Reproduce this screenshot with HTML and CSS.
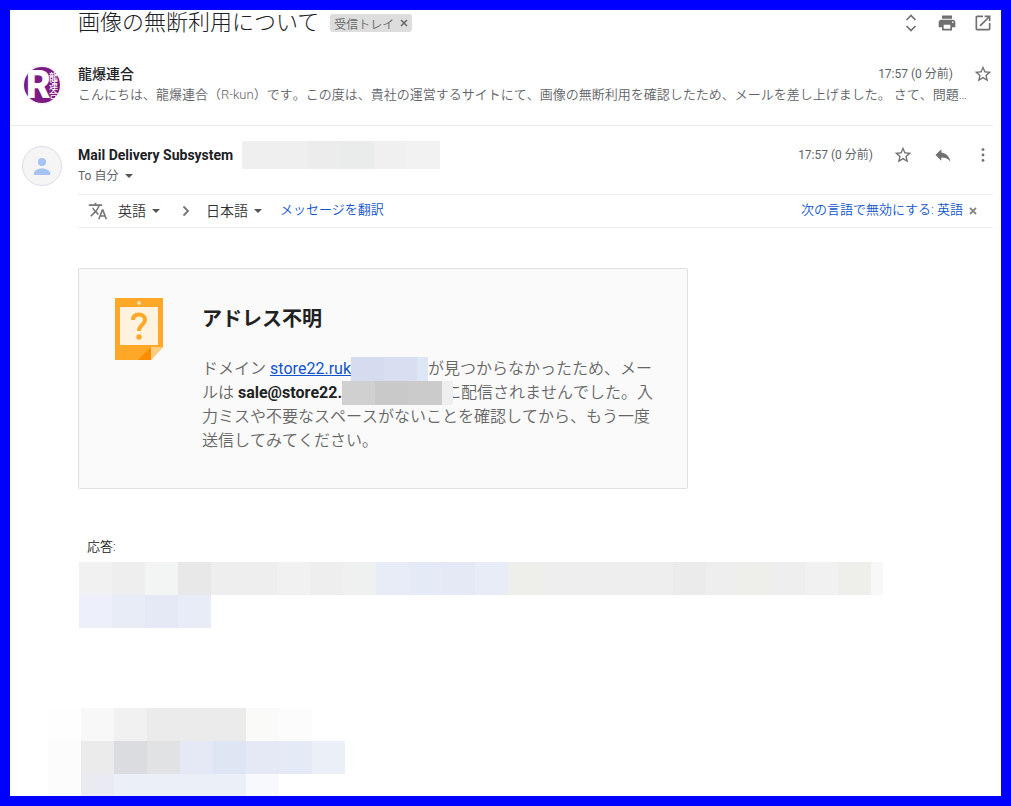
FILE: index.html
```html
<!DOCTYPE html>
<html lang="ja">
<head>
<meta charset="utf-8">
<title>画像の無断利用について</title>
<link rel="stylesheet" href="styles.css">
</head>
<body>
<main class="frame">
  <header class="subject">
    <h1 class="subject-title">画像の無断利用について</h1>
    <span class="chip">受信トレイ<button class="chip-close" aria-label="ラベルを削除"><svg width="8" height="8" viewBox="0 0 8 8"><path d="M1 1l6 6M7 1L1 7" stroke="#666" stroke-width="1.5"/></svg></button></span>
    <div class="tools">
      <button class="icon" aria-label="すべて展開"><svg viewBox="0 0 20 20"><path d="M5.500 7L10 2.500 14.500 7M5.500 13l4.500 4.500 4.500-4.500" fill="none" stroke="#707070" stroke-width="1.700"/></svg></button>
      <button class="icon" aria-label="印刷"><svg viewBox="0 0 24 24"><path d="M19 8H5c-1.66 0-3 1.34-3 3v6h4v4h12v-4h4v-6c0-1.66-1.34-3-3-3zm-3 11H8v-5h8v5zm3-7c-.55 0-1-.45-1-1s.45-1 1-1 1 .45 1 1-.45 1-1 1zm-1-9H6v4h12V3z"/></svg></button>
      <button class="icon" aria-label="新しいウィンドウで開く"><svg viewBox="0 0 24 24"><path d="M19 19H5V5h7V3H5c-1.11 0-2 .9-2 2v14c0 1.1.89 2 2 2h14c1.1 0 2-.9 2-2v-7h-2v7zM14 3v2h3.59l-9.83 9.83 1.41 1.41L19 6.41V10h2V3h-7z"/></svg></button>
    </div>
  </header>

  <article class="mail mail-closed">
    <svg class="avatar" viewBox="0 0 40 40" aria-hidden="true">
      <circle cx="20" cy="20" r="19" fill="#fff" stroke="#eee"/>
      <circle cx="20" cy="20" r="18" fill="#7b1b85"/>
      <text class="logo-r" x="4" y="33">R</text>
      <text class="logo-kanji" x="27" y="15">龍</text>
      <text class="logo-kanji" x="27" y="24">連</text>
      <text class="logo-kanji" x="27" y="33">合</text>
    </svg>
    <div class="mail-body">
      <div class="mail-line">
        <h2 class="sender">龍爆連合</h2>
        <span class="time">17:57 (0 分前)</span>
        <button class="icon" aria-label="スターを付ける"><svg viewBox="0 0 24 24"><path d="M22 9.24l-7.19-.62L12 2 9.19 8.63 2 9.24l5.46 4.73L5.82 21 12 17.27 18.18 21l-1.63-7.03L22 9.24zM12 15.4l-3.76 2.27 1-4.28-3.32-2.88 4.38-.38L12 6.1l1.71 4.04 4.38.38-3.32 2.88 1 4.28L12 15.4z"/></svg></button>
      </div>
      <p class="snippet">こんにちは、龍爆連合（R-kun）です。この度は、貴社の運営するサイトにて、画像の無断利用を確認したため、メールを差し上げました。 さて、問題…</p>
    </div>
  </article>

  <article class="mail">
    <svg class="avatar" viewBox="0 0 40 40" aria-hidden="true">
      <circle cx="20" cy="20" r="19.5" fill="#f5f5f5" stroke="#dadce8"/>
      <circle cx="20" cy="16" r="4" fill="#a5c3f5"/>
      <path d="M12 29v-2c0-3 5-4.500 8-4.500s8 1.500 8 4.500v2z" fill="#a5c3f5"/>
    </svg>
    <div class="mail-body">
      <div class="mail-line">
        <h2 class="sender sender-open">Mail Delivery Subsystem</h2>
        <span class="mask mask-address"></span>
        <span class="time">17:57 (0 分前)</span>
        <button class="icon" aria-label="スターを付ける"><svg viewBox="0 0 24 24"><path d="M22 9.24l-7.19-.62L12 2 9.19 8.63 2 9.24l5.46 4.73L5.82 21 12 17.27 18.18 21l-1.63-7.03L22 9.24zM12 15.4l-3.76 2.27 1-4.28-3.32-2.88 4.38-.38L12 6.1l1.71 4.04 4.38.38-3.32 2.88 1 4.28L12 15.4z"/></svg></button>
        <button class="icon" aria-label="返信"><svg viewBox="0 0 24 24"><path d="M10 9V5l-7 7 7 7v-4.100c5 0 8.500 1.600 11 5.100-1-5-4-10-11-11z"/></svg></button>
        <button class="icon" aria-label="その他"><svg viewBox="0 0 24 24"><circle cx="12" cy="5.500" r="1.700"/><circle cx="12" cy="12" r="1.700"/><circle cx="12" cy="18.500" r="1.700"/></svg></button>
      </div>
      <button class="recipient">To 自分<svg class="caret" viewBox="0 0 8 4"><path d="M0 0h8L4 4z"/></svg></button>

      <div class="translate">
        <svg class="translate-icon" viewBox="0 0 24 24"><path d="M12.870 15.070l-2.540-2.510.03-.03c1.740-1.940 2.980-4.170 3.710-6.530H17V4h-7V2H8v2H1v1.990h11.170C11.500 7.920 10.440 9.750 9 11.350 8.070 10.320 7.300 9.190 6.690 8h-2c.73 1.630 1.730 3.170 2.980 4.560l-5.090 5.020L4 19l5-5 3.110 3.110.76-2.040zM18.500 10h-2L12 22h2l1.120-3h4.750L21 22h2l-4.500-12zm-2.620 7l1.620-4.330L19.120 17h-3.240z"/></svg>
        <label class="language"><select aria-label="元の言語"><option>英語</option></select><svg class="caret" viewBox="0 0 8 4"><path d="M0 0h8L4 4z"/></svg></label>
        <svg class="chevron" viewBox="0 0 8 12"><path d="M1.500 1.500L6 6l-4.500 4.500" fill="none" stroke="#757575" stroke-width="1.800"/></svg>
        <label class="language"><select aria-label="翻訳先の言語"><option>日本語</option></select><svg class="caret" viewBox="0 0 8 4"><path d="M0 0h8L4 4z"/></svg></label>
        <a class="link" href="#">メッセージを翻訳</a>
        <a class="link link-off" href="#">次の言語で無効にする: 英語</a>
        <button class="bar-close" aria-label="閉じる"><svg width="8" height="8" viewBox="0 0 8 8"><path d="M1 1l6 6M7 1L1 7" stroke="#888" stroke-width="1.800"/></svg></button>
      </div>

      <section class="notice">
        <svg class="notice-icon" viewBox="0 0 48 62" aria-hidden="true">
          <path d="M0 0h48v49L36 62H0z" fill="#ffa726"/>
          <circle cx="24" cy="5" r="2" fill="#ffe0b2"/>
          <path d="M5 9h38v38H5z" fill="#fff3e0"/>
          <path d="M23 62l13-13v13z" fill="#fb8c00"/>
          <path d="M36 49h12L36 62z" fill="#ffcc80"/>
          <path d="M18 22c0-4 2.500-5.500 6-5.500s6 2 6 5.500c0 4.500-6 5-6 11" fill="none" stroke="#ffa726" stroke-width="4"/>
          <circle cx="24" cy="39" r="2.700" fill="#ffa726"/>
        </svg>
        <div class="notice-text">
          <h3 class="notice-title">アドレス不明</h3>
          <p class="notice-message">ドメイン <a class="domain" href="#">store22.ruk</a><span class="mask mask-domain"></span>が見つからなかったため、メールは <b class="address">sale@store22.</b><span class="mask mask-mail"></span>に配信されませんでした。入力ミスや不要なスペースがないことを確認してから、もう一度送信してみてください。</p>
        </div>
      </section>

      <section class="response">
        <h3 class="response-title">応答:</h3>
        <div class="mosaic">
          <i class="g2"></i><i class="g3"></i><i class="mint"></i><i class="g5"></i><i class="g3"></i><i class="g3"></i><i class="g2"></i><i class="g3"></i><i class="sage"></i><i class="b3"></i><i class="b4"></i><i class="b5"></i><i class="b3"></i><i class="sand"></i><i class="g3"></i><i class="g3"></i><i class="g3"></i><i class="g3"></i><i class="g4"></i><i class="g3"></i><i class="sand"></i><i class="g3"></i><i class="g2"></i><i class="sand"></i><i class="g1 narrow"></i>
        </div>
        <div class="mosaic">
          <i class="b1"></i><i class="b3"></i><i class="b5"></i><i class="b3"></i>
        </div>
      </section>
    </div>
  </article>

  <footer class="signature">
    <div class="mosaic">
      <i class="blank"></i><i class="g1"></i><i class="g2"></i><i class="g4"></i><i class="g4"></i><i class="g4"></i><i class="cream"></i><i class="g0"></i>
    </div>
    <div class="mosaic">
      <i class="g0"></i><i class="g4"></i><i class="g7"></i><i class="g6"></i><i class="b5"></i><i class="b6"></i><i class="b5"></i><i class="b4"></i><i class="b2"></i><i class="blank narrow"></i>
    </div>
    <div class="mosaic mosaic-cut">
      <i class="g0"></i><i class="lilac"></i><i class="b2"></i><i class="b2"></i><i class="b2"></i><i class="b2"></i><i class="b0"></i>
    </div>
  </footer>
</main>
</body>
</html>
```

FILE: styles.css
```css
* {
  box-sizing: border-box;
}

body {
  margin: 0;
  background: #fff;
  color: #202124;
  font-family: Roboto, "Noto Sans CJK JP", sans-serif;
  font-size: 13px;
}

h1, h2, h3, p {
  margin: 0;
}

button, select {
  margin: 0;
  padding: 0;
  border: 0;
  background: none;
  color: inherit;
  font: inherit;
}

svg {
  display: block;
  flex: none;
}

.frame {
  min-height: 100vh;
  border: 10px solid #00f;
}

.subject {
  display: flex;
  align-items: center;
  height: 26px;
  padding: 0 8px 0 68px;
}

.subject-title {
  font-size: 22px;
  font-weight: 300;
  line-height: 24px;
}

.chip {
  display: flex;
  align-items: center;
  gap: 6px;
  height: 18px;
  margin-left: 11px;
  padding: 0 4px;
  border-radius: 3px;
  background: #ddd;
  color: #666;
  font-size: 12px;
  font-weight: 350;
}

.tools {
  display: flex;
  gap: 16px;
  margin-left: auto;
}

.icon {
  flex: none;
  width: 20px;
  height: 20px;
}

.icon svg {
  width: 20px;
  height: 20px;
  fill: #707070;
}

.mail {
  display: flex;
  gap: 16px;
  padding: 20px 8px 0 12px;
}

.mail-closed {
  margin-right: 8px;
  padding: 29px 0 20px 12px;
  border-bottom: 1px solid #ebebeb;
}

.avatar {
  width: 40px;
  height: 40px;
}

.logo-r {
  fill: #fff;
  font: 900 38px Roboto, sans-serif;
}

.logo-kanji {
  fill: #fff;
  font: 500 9px "Noto Sans CJK JP", sans-serif;
}

.mail-body {
  flex: 1;
  min-width: 0;
}

.mail-line {
  display: flex;
  align-items: center;
  gap: 20px;
  height: 18px;
}

.mail-line + * {
  margin-top: 2px;
}

.sender {
  font-size: 14px;
  font-weight: 500;
  line-height: 20px;
  white-space: nowrap;
}

.sender-open {
  font-weight: 700;
}

.time {
  margin-left: auto;
  color: #5f6368;
  font-size: 12px;
  line-height: 20px;
  white-space: nowrap;
}

.snippet {
  overflow: hidden;
  color: #5f6368;
  font-kerning: none;
  font-size: 13px;
  font-weight: 350;
  line-height: 20px;
  text-overflow: ellipsis;
  white-space: nowrap;
}

.mask {
  display: inline-block;
}

.mask-address {
  flex: none;
  width: 198px;
  height: 28px;
  margin-left: -11px;
  background: linear-gradient(90deg, #efefef 0 66px, #ececec 66px 99px, #eaecec 99px 132px, #f0f0f0 132px 165px, #f2f2f2 165px);
}

.recipient {
  display: flex;
  align-items: center;
  gap: 7px;
  color: #5f6368;
  font-size: 12px;
  line-height: 20px;
}

.caret {
  width: 8px;
  height: 4px;
  fill: #555;
  pointer-events: none;
}

.translate {
  display: flex;
  align-items: center;
  height: 34px;
  margin-top: 8px;
  padding: 0 16px 0 10px;
  border: solid #ebeef0;
  border-width: 1px 0;
}

.translate-icon {
  width: 20px;
  height: 20px;
  margin-right: 10px;
  fill: #757575;
}

.language {
  display: flex;
  align-items: center;
  gap: 6px;
}

.language select {
  appearance: none;
  color: #333;
  font-size: 14px;
  font-weight: 350;
}

.chevron {
  width: 8px;
  height: 12px;
  margin: 0 16px 0 22px;
}

.link {
  margin-left: 18px;
  padding-bottom: 2px;
  color: #15c;
  font-weight: 350;
  line-height: 20px;
  text-decoration: none;
}

.link-off {
  margin-left: auto;
}

.bar-close {
  margin-left: 6px;
}

.notice {
  display: flex;
  gap: 39px;
  max-width: 610px;
  margin-top: 40px;
  padding: 29px 32px 35px 36px;
  border: 1px solid #e0e0e0;
  border-radius: 2px;
  background: #fafafa;
}

.notice-icon {
  width: 48px;
  height: 62px;
}

.notice-title {
  margin-top: 9px;
  color: #212121;
  font-size: 20px;
  font-weight: 700;
  line-height: 24px;
}

.notice-message {
  margin-top: 26px;
  color: #666;
  font-kerning: none;
  font-size: 16px;
  font-weight: 350;
  line-height: 24px;
}

.domain {
  color: #15c;
  font-weight: 400;
}

.address {
  color: #212121;
  font-weight: 700;
}

.mask-domain,
.mask-mail {
  height: 24px;
  vertical-align: top;
}

.mask-domain {
  width: 77px;
  background: linear-gradient(90deg, #d6dcf0 0 33px, #d9dff0 33px 66px, #dce6f5 66px);
}

.mask-mail {
  position: relative;
  width: 111px;
  margin-right: -8px;
  background: linear-gradient(90deg, #d0d0d0 0 33px, #c9c9c9 33px 66px, #cbcbcb 66px 100px, #efefef 100px);
}

.response {
  margin-top: 48px;
}

.response-title {
  padding-left: 9px;
  color: #222;
  font-size: 13px;
  font-weight: 350;
  line-height: 20px;
}

.response .mosaic {
  margin-left: 1px;
}

.response-title + .mosaic {
  margin-top: 5px;
}

.mosaic {
  display: flex;
  height: 33px;
}

.mosaic i {
  flex: 0 1 33px;
}

.mosaic .narrow {
  flex-basis: 12px;
}

.signature {
  padding: 80px 0 0 38px;
}

.mosaic-cut {
  height: 22px;
}

.g0 { background: #fcfcfc; }
.g1 { background: #f8f8f8; }
.g2 { background: #f1f1f1; }
.g3 { background: #eeeeee; }
.g4 { background: #ebebeb; }
.g5 { background: #e8e8e8; }
.g6 { background: #e1e2e4; }
.g7 { background: #dbdcdf; }
.b0 { background: #f8f9fd; }
.b1 { background: #edf0fa; }
.b2 { background: #eaeff8; }
.b3 { background: #e7ecf7; }
.b4 { background: #e4eaf6; }
.b5 { background: #e4e9f5; }
.b6 { background: #dee5f3; }
.mint { background: #f2f5f4; }
.sage { background: #eef1ef; }
.sand { background: #eeeeeb; }
.cream { background: #fafaf8; }
.lilac { background: #eaebf2; }
.blank { background: #fefefe; }
```
